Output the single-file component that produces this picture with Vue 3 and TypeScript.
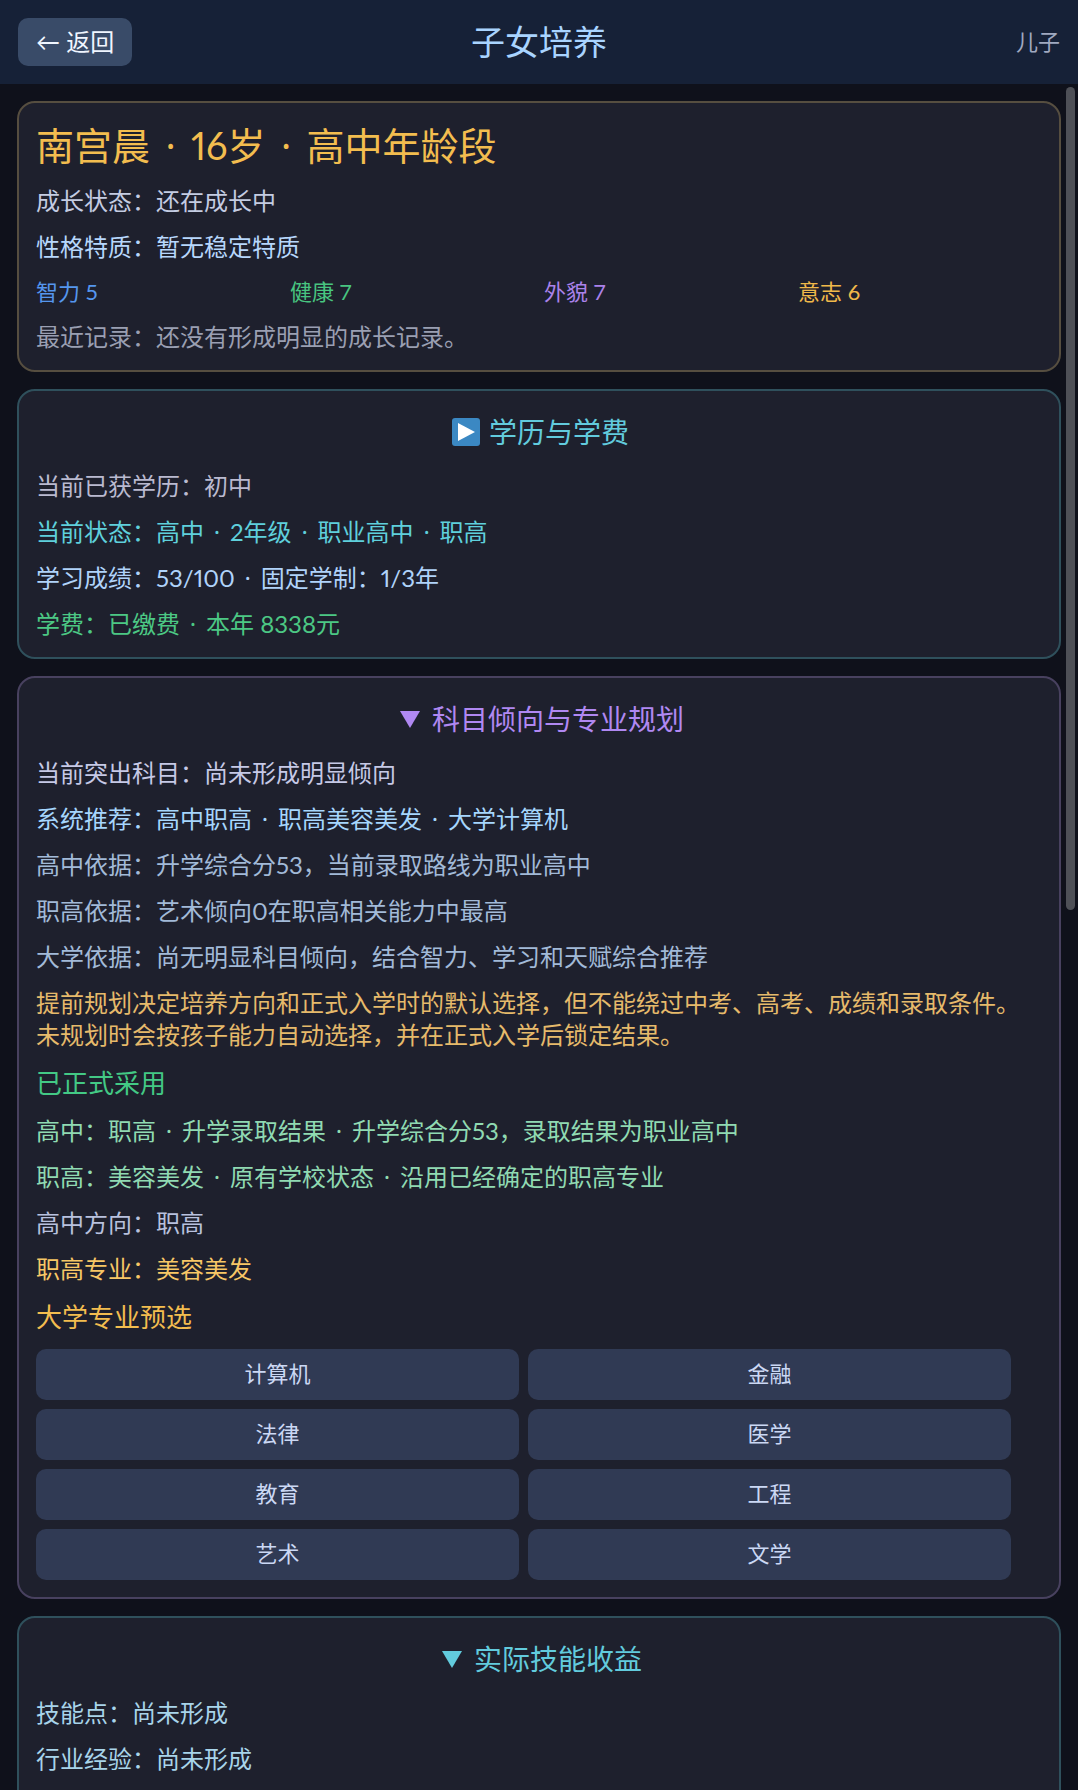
<script setup lang="ts">
import { ref } from 'vue'

type Tone =
  | 'soft' | 'sky' | 'muted' | 'mauve' | 'cyan' | 'ice' | 'green' | 'lilac'
  | 'azure' | 'steel' | 'sand' | 'mint' | 'mist' | 'honey' | 'aqua'

interface Line {
  text: string
  tone: Tone
}

const profileTitle = '南宫晨 · 16岁 · 高中年龄段'

const profileLines: Line[] = [
  { text: '成长状态：还在成长中', tone: 'soft' },
  { text: '性格特质：暂无稳定特质', tone: 'sky' },
]

const stats = [
  { label: '智力', value: 5, tone: 'stat-blue' },
  { label: '健康', value: 7, tone: 'stat-green' },
  { label: '外貌', value: 7, tone: 'stat-purple' },
  { label: '意志', value: 6, tone: 'stat-amber' },
]

const educationLines: Line[] = [
  { text: '当前已获学历：初中', tone: 'mauve' },
  { text: '当前状态：高中 · 2年级 · 职业高中 · 职高', tone: 'cyan' },
  { text: '学习成绩：53/100 · 固定学制：1/3年', tone: 'ice' },
  { text: '学费：已缴费 · 本年 8338元', tone: 'green' },
]

const planLines: Line[] = [
  { text: '当前突出科目：尚未形成明显倾向', tone: 'lilac' },
  { text: '系统推荐：高中职高 · 职高美容美发 · 大学计算机', tone: 'azure' },
  { text: '高中依据：升学综合分53，当前录取路线为职业高中', tone: 'steel' },
  { text: '职高依据：艺术倾向0在职高相关能力中最高', tone: 'steel' },
  { text: '大学依据：尚无明显科目倾向，结合智力、学习和天赋综合推荐', tone: 'steel' },
]

const adoptedLines: Line[] = [
  { text: '高中：职高 · 升学录取结果 · 升学综合分53，录取结果为职业高中', tone: 'mint' },
  { text: '职高：美容美发 · 原有学校状态 · 沿用已经确定的职高专业', tone: 'mint' },
  { text: '高中方向：职高', tone: 'mist' },
  { text: '职高专业：美容美发', tone: 'honey' },
]

const majors = ['计算机', '金融', '法律', '医学', '教育', '工程', '艺术', '文学']
const selectedMajor = ref<string | null>(null)

const skillLines: Line[] = [
  { text: '技能点：尚未形成', tone: 'aqua' },
  { text: '行业经验：尚未形成', tone: 'aqua' },
]

const parts = (text: string): string[] => text.split(/( · )/)
</script>

<template>
  <div class="app">
    <header class="topbar">
      <button type="button" class="back">← 返回</button>
      <h1>子女培养</h1>
      <span class="who">儿子</span>
    </header>

    <div class="body">
      <main class="scroll">
        <section class="card amber">
          <h2 class="name">
            <span v-for="(p, i) in parts(profileTitle)" :key="i" :class="{ dot: p === ' · ' }">{{ p }}</span>
          </h2>
          <p v-for="line in profileLines" :key="line.text" :class="line.tone">{{ line.text }}</p>
          <ul class="stats">
            <li v-for="s in stats" :key="s.label" :class="s.tone">{{ s.label }} {{ s.value }}</li>
          </ul>
          <p class="muted">最近记录：还没有形成明显的成长记录。</p>
        </section>

        <section class="card teal">
          <h2>
            <button type="button" class="toggle">
              <svg class="play" viewBox="0 0 28 28" aria-hidden="true">
                <rect width="28" height="28" rx="3" fill="#3b88c3" />
                <path d="M6 5 L23 14 L6 23 Z" fill="#fff" />
              </svg>学历与学费
            </button>
          </h2>
          <p v-for="line in educationLines" :key="line.text" :class="line.tone">
            <span v-for="(p, i) in parts(line.text)" :key="i" :class="{ dot: p === ' · ' }">{{ p }}</span>
          </p>
        </section>

        <section class="card purple">
          <h2>
            <button type="button" class="toggle">
              <svg class="caret" viewBox="0 0 20 17" aria-hidden="true">
                <path d="M0 0 H20 L10 17 Z" fill="currentColor" />
              </svg>科目倾向与专业规划
            </button>
          </h2>
          <p v-for="line in planLines" :key="line.text" :class="line.tone">
            <span v-for="(p, i) in parts(line.text)" :key="i" :class="{ dot: p === ' · ' }">{{ p }}</span>
          </p>
          <p class="sand">提前规划决定培养方向和正式入学时的默认选择，但不能绕过中考、高考、成绩和录取条件。<br>未规划时会按孩子能力自动选择，并在正式入学后锁定结果。</p>
          <h3 class="adopted">已正式采用</h3>
          <p v-for="line in adoptedLines" :key="line.text" :class="line.tone">
            <span v-for="(p, i) in parts(line.text)" :key="i" :class="{ dot: p === ' · ' }">{{ p }}</span>
          </p>
          <h3 class="preselect">大学专业预选</h3>
          <div class="majors">
            <button
              v-for="m in majors"
              :key="m"
              type="button"
              :aria-pressed="selectedMajor === m"
              @click="selectedMajor = m"
            >{{ m }}</button>
          </div>
        </section>

        <section class="card teal last">
          <h2>
            <button type="button" class="toggle">
              <svg class="caret" viewBox="0 0 20 17" aria-hidden="true">
                <path d="M0 0 H20 L10 17 Z" fill="currentColor" />
              </svg>实际技能收益
            </button>
          </h2>
          <p v-for="line in skillLines" :key="line.text" :class="line.tone">{{ line.text }}</p>
        </section>
      </main>
      <div class="thumb" aria-hidden="true"></div>
    </div>
  </div>
</template>

<style>
body {
  margin: 0;
  background: #0f111b;
}
</style>

<style scoped>
.app {
  display: flex;
  flex-direction: column;
  height: 100vh;
  overflow: hidden;
  background: #0f111b;
  font-family: Lato, "Noto Sans CJK SC", sans-serif;
  font-size: 24px;
  font-variant-numeric: proportional-nums;
  line-height: 32px;
}

button {
  border: 0;
  font-family: inherit;
  cursor: pointer;
}

h1,
h2,
h3,
p,
ul {
  margin: 0;
  padding: 0;
  font-weight: 400;
}

/* top bar */
.topbar {
  display: grid;
  grid-template-columns: 1fr auto 1fr;
  align-items: center;
  padding: 18px;
  background: #162137;
}

.back {
  justify-self: start;
  height: 48px;
  padding: 0 18px;
  border-radius: 10px;
  background: #394b68;
  color: #f0f6ff;
  font-size: 24px;
  line-height: 32px;
}

h1 {
  color: #a9d4ff;
  font-size: 34px;
  line-height: 48px;
}

.who {
  justify-self: end;
  color: #a0a9c0;
  font-size: 22px;
  line-height: 30px;
}

/* scrolling area */
.body {
  position: relative;
  flex: 1;
  min-height: 0;
}

.scroll {
  display: flex;
  flex-direction: column;
  gap: 17px;
  box-sizing: border-box;
  height: 100%;
  padding: 17px;
  overflow-y: auto;
  scrollbar-width: none;
}

.thumb {
  position: absolute;
  top: 3px;
  right: 3px;
  width: 9px;
  height: 46vh;
  border-radius: 5px;
  background: #4e5057;
}

/* cards */
.card {
  display: flex;
  flex-direction: column;
  flex-shrink: 0;
  gap: 14px;
  padding: 17px;
  border: 2px solid;
  border-radius: 18px;
  background: #1e202d;
}

.card.last {
  padding-bottom: 48px;
}

.amber { border-color: #564e40; }
.teal { border-color: #2f505c; }
.purple { border-color: #48415f; }

.name {
  color: #f3bd4f;
  font-size: 38px;
  line-height: 51px;
}

.dot {
  display: inline-block;
  width: 26px;
  font-family: "Noto Sans", sans-serif;
  text-align: center;
  vertical-align: top;
  white-space: pre;
}

.name .dot {
  width: 41px;
}

.toggle {
  display: flex;
  align-items: center;
  justify-content: center;
  width: 100%;
  height: 48px;
  padding: 0;
  background: none;
  color: #62cbdd;
  font-size: 28px;
  line-height: 48px;
}

.purple .toggle { color: #b088f2; }

.play {
  width: 28px;
  height: 28px;
  margin: 0 9px 0 3px;
}

.caret {
  width: 20px;
  height: 17px;
  margin: 0 12px 0 6px;
}

.stats {
  display: grid;
  grid-template-columns: repeat(4, 1fr);
  column-gap: 10px;
  list-style: none;
  font-size: 22px;
  line-height: 30px;
}

.stat-blue { color: #5596ee; }
.stat-green { color: #48c580; }
.stat-purple { color: #ab82ea; }
.stat-amber { color: #f0b94a; }

h3 {
  font-size: 26px;
  line-height: 36px;
}

.adopted { color: #43c985; }
.preselect { color: #f3bd4f; }

.majors {
  display: grid;
  grid-template-columns: 1fr 1fr;
  gap: 9px;
  margin-right: 31px;
}

.majors button {
  height: 51px;
  padding: 0 12px 2px;
  border-radius: 10px;
  background: #303a54;
  color: #cbd8f4;
  font-size: 22px;
  line-height: 30px;
}

/* line tones */
.soft { color: #c4cce2; }
.sky { color: #b7d7fc; }
.muted { color: #9a9fb2; }
.mauve { color: #babad0; }
.cyan { color: #5fd0dc; }
.ice { color: #b0d3fa; }
.green { color: #4cc884; }
.lilac { color: #c6c9e6; }
.azure { color: #a6d6fd; }
.steel { color: #a2bad8; }
.sand { color: #e6ba6b; }
.mint { color: #90dab2; }
.mist { color: #b8c1de; }
.honey { color: #f7c766; }
.aqua { color: #a8d4ea; }
</style>
